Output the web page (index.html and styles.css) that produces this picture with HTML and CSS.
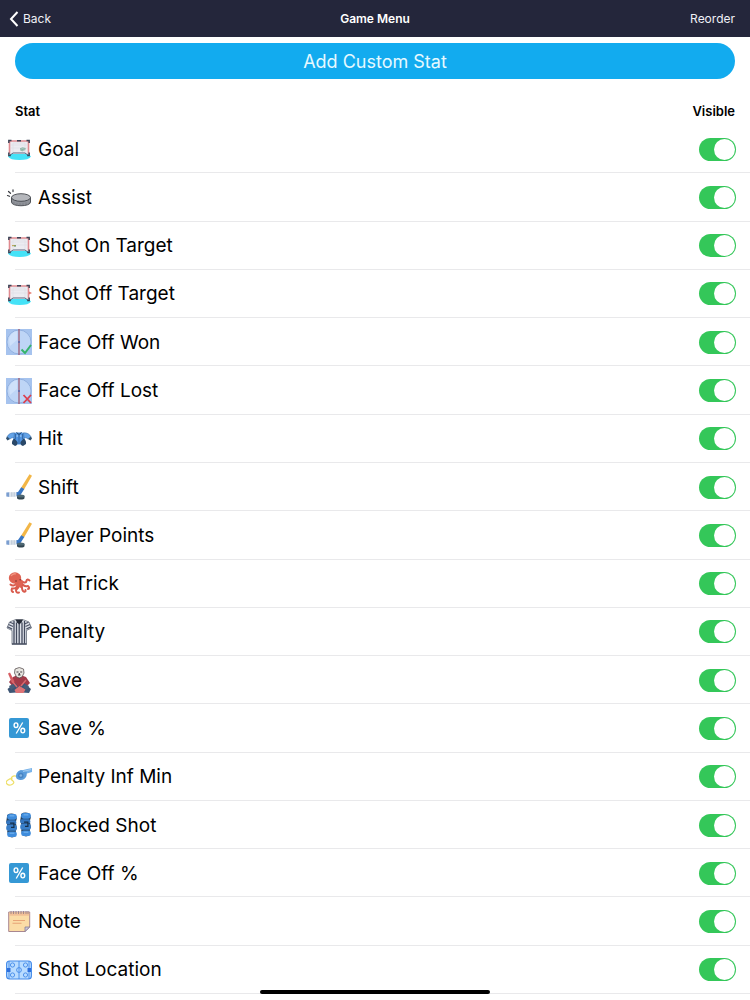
FILE: index.html
```html
<!DOCTYPE html>
<html lang="en">
<head>
  <meta charset="UTF-8">
  <meta name="viewport" content="width=device-width, initial-scale=1">
  <title>Game Menu</title>
  <link rel="stylesheet" href="styles.css">
</head>
<body>
  <!-- stat icons, used by the rows below -->
  <svg class="sprites" aria-hidden="true">
    <symbol id="net" viewBox="0 0 26 26">
      <path d="M3.500 18l19 0 2.500 2.500q-2 3.500-11.500 3.500T2 20.500z" fill="#45e2f7"/>
      <path d="M4 5h18v13l-3-1H7l-3 1z" fill="#ececf1"/>
      <path d="M7 16V7h12v9M5 9h16M5 12h16" stroke="#d9dae3" stroke-width=".5" fill="none"/>
      <path d="M3.500 18V5h19v13" fill="none" stroke="#e08a90" stroke-width="1.600"/>
      <path d="M3.500 19.500l3.500-2.500h12l3.500 2.500" fill="none" stroke="#59607a" stroke-width="1"/>
      <path d="M2.800 7V4.500H5.500M20.500 4.500h2.700V7M2.800 16.500v3h2M23.200 16.500v3h-2M11 4.800h4" fill="none" stroke="#3b4356" stroke-width="1.400"/>
    </symbol>
    <symbol id="goal" viewBox="0 0 26 26">
      <use href="#net"/>
      <path d="M14 12.500l2.500-1.500 3 1v2l-3 1.500-2.500-1z" fill="#a9c6bd"/>
      <path d="M14 12.500l2.500 1 3-1M16 14v1" stroke="#7ba396" stroke-width=".6" fill="none"/>
    </symbol>
    <symbol id="on-target" viewBox="0 0 26 26">
      <use href="#net"/>
      <path d="M6 12.600h4" stroke="#c2aa5c" stroke-width="1.200"/>
      <path d="M8 13h2" stroke="#3c8a63" stroke-width=".8"/>
    </symbol>
    <symbol id="off-target" viewBox="0 0 26 26">
      <use href="#net"/>
      <path d="M23 10.500l3 1.500-3 1.500z" fill="#e4786c"/>
    </symbol>
    <symbol id="puck" viewBox="0 0 26 26">
      <path d="M5.500 13.500v4.500c0 5 19 5 19 0v-4.500z" fill="#8f9299" stroke="#43464c" stroke-width=".9"/>
      <path d="M8 18v2.500M11 19v2.500M14 19v2.700M17 19v2.500M20 18.500v2.400" stroke="#72757c" stroke-width=".6"/>
      <ellipse cx="15" cy="13.500" rx="9.500" ry="3.800" fill="#b5b7bc" stroke="#43464c" stroke-width=".9"/>
      <path d="M1.500 11.500l2 .8M2.500 7.500l2 1.800M7 5.800v1.800" stroke="#3a3d42" stroke-width="1.200" stroke-linecap="round"/>
    </symbol>
    <symbol id="faceoff" viewBox="0 0 26 26">
      <rect width="26" height="26" fill="#a6c3ee"/>
      <circle cx="13" cy="13" r="12" fill="#bed5f6" stroke="#8aa9da" stroke-width=".8"/>
      <path d="M3 10a10 10 0 0 1 8-8v9L4 17z" fill="#cfe1fa"/>
      <path d="M13 0v26" stroke="#9a5269" stroke-width="1.200"/>
      <circle cx="13" cy="13" r="1" fill="#5869ad"/>
    </symbol>
    <symbol id="won" viewBox="0 0 26 26">
      <use href="#faceoff"/>
      <path d="M15.500 20.500l3.500 3.500 6-8" fill="none" stroke="#35b56a" stroke-width="2"/>
    </symbol>
    <symbol id="lost" viewBox="0 0 26 26">
      <use href="#faceoff"/>
      <path d="M17.500 17l7.500 8M25 17l-7.500 8" stroke="#dc3f4e" stroke-width="1.800"/>
    </symbol>
    <symbol id="pads" viewBox="0 0 26 26">
      <path d="M8 7l2.500-.5h5L18 7l1.500 10.500-3 1h-7l-3-1z" fill="#4f93e0"/>
      <path d="M8.500 6.800Q3 6.500 1 11l3 2q1.500-1.500 4-1.500zM17.500 6.800Q23 6.500 25 11l-3 2q-1.500-1.500-4-1.500z" fill="#63a3e8" stroke="#3a6ca5" stroke-width=".5"/>
      <path d="M1 10.500L0 12.500l1.500 2L4 13zM25 10.500l1 2-1.500 2L22 13z" fill="#2f506f"/>
      <path d="M8.500 12.500q-3 1.500-2.500 5.500l3 2q3-1 2.500-4zM17.500 12.500q3 1.500 2.500 5.500l-3 2q-3-1-2.500-4z" fill="#2a4868"/>
      <path d="M10.500 6.500l2.500 2 2.500-2" fill="none" stroke="#24405f"/>
      <path d="M13 8.500V18M9.500 8v5M16.500 8v5" fill="none" stroke="#2d5a90" stroke-width=".7"/>
      <path d="M10.500 10h1.500M14 10h1.500" stroke="#b8dbfa"/>
    </symbol>
    <symbol id="stick" viewBox="0 0 26 26">
      <path d="M23.500.3l2.500 1.400L18 15.500l-3-1.700z" fill="#f2b647"/>
      <path d="M15.200 13.300l3.100 1.800-3.500 5.300q-.6 1.300-2 1.500L10 22.300v-4l2-.3z" fill="#3977c5"/>
      <path d="M.3 18.500l3.200-.3v4.700l-3.200-.4z" fill="#7b9ed0"/>
      <path d="M3.500 18.200h7v4.500l-7 .2z" fill="#dfe6ee"/>
      <path d="M5.800 18.200v4.400M8.200 18.200v4.400" stroke="#a9b8c9" stroke-width=".7"/>
      <path d="M11 22v2c0 2 7.500 2 7.500 0v-2z" fill="#30444f"/>
      <ellipse cx="14.700" cy="22" rx="3.800" ry="1.500" fill="#4f6873"/>
    </symbol>
    <symbol id="octopus" viewBox="0 0 26 26">
      <g fill="none" stroke="#d95b4d" stroke-width="2" stroke-linecap="round">
        <path d="M11 12c-2 3-5 3-6.500 1.500M12 12c0 4-3 6-6 5.500-1 2 0 3 1 3.500M13 12c1 4-2 6-3 7 0 2 1 3 3 2.500M14 11c3 3 1 7 3 9 1.500 1.500 3 .5 2.500-1M15 11c2 4 4 5 7 4 1.500 1 1.500 3 0 3M15 9.500c2 2 5 3 5.500.5 0-2 2-2 3-.5"/>
      </g>
      <ellipse cx="9" cy="7" rx="6.200" ry="5.700" fill="#df6353"/>
      <path d="M9 9q6-3 8 2l-2 6-6-3z" fill="#df6353"/>
      <path d="M5 5q2-3 5-2" fill="none" stroke="#f19580" stroke-width="1.300"/>
      <circle cx="10" cy="10" r=".8" fill="#702e2c"/><circle cx="14.200" cy="8.800" r=".7" fill="#702e2c"/>
    </symbol>
    <symbol id="referee" viewBox="0 0 26 26">
      <path d="M9 .8L3.500 3 1 9l5 2.500V25.500h14.500V11.500L25.500 9 23 3 17.500.8z" fill="#dfe3ea" stroke="#535b6b" stroke-width=".7"/>
      <path d="M8 2v23M10.500 3.500V25M13.200 5v20M16 3.500V25M18.500 2v23" stroke="#434a5d" stroke-width="1.300"/>
      <path d="M1.500 7.800l4.700 2.300M2.500 5.500l4.500 2M4 3.300L8 5M25 7.800l-4.700 2.300M24 5.500l-4.500 2M22.500 3.300L18.500 5" stroke="#4b5265" stroke-width="1.200"/>
      <path d="M9.500.5h7.500L15.500 3.500 13.200 5.500 11 3.500z" fill="#262c38"/>
      <path d="M6 24.800h14.500" stroke="#4b5263" stroke-width="1.200"/>
    </symbol>
    <symbol id="goalie" viewBox="0 0 26 26">
      <path d="M7 10l6-2.500L20 10l4 6-4 4H7l-4-5z" fill="#a23a48"/>
      <path d="M2 6.500l2-1 4.500 9-2.500 1.500z" fill="#d65d62"/>
      <path d="M9 16L1.500 22l2 4 7-.5 3-5zM18 16l7 6-2 4-7-.5-3-5z" fill="#3d5574"/>
      <path d="M8.500 23l5-4 6 3.500-2 3.500H10z" fill="#dd7376"/>
      <path d="M6 14l5 6M20 13l-5 6" stroke="#d9686c" stroke-width="1.500"/>
      <path d="M3 19l4-2 2 3-4 3zM23 19l-4-2-2 3 4 3z" fill="#465e7a"/>
      <path d="M9 2q4.300-3 8.500 0l.5 4-2 4-2.700 1L10.500 10 8.500 6z" fill="#e7e5df" stroke="#4b4044" stroke-width=".7"/>
      <path d="M10.500 5h2M14.200 5h2M12 8h2.600M13.300 6v2" stroke="#443f45" stroke-width="1.200"/>
    </symbol>
    <symbol id="percent" viewBox="0 0 26 26">
      <rect x="3" y="3" width="20" height="20" rx="2" fill="#3598d5"/>
      <g fill="none" stroke="#fff" stroke-width="1.400">
        <ellipse cx="10" cy="10.200" rx="1.900" ry="2.300"/>
        <ellipse cx="16.800" cy="15.600" rx="1.900" ry="2.300"/>
        <path d="M16.700 7.500l-6.500 11" stroke-width="1.300"/>
      </g>
    </symbol>
    <symbol id="whistle" viewBox="0 0 26 26">
      <path d="M11 12.500q-3-1.500-5 .5t1 4q2 2-1 3.500t-5-.5 1-4 4.500-1" fill="none" stroke="#eedf66" stroke-width="1.200"/>
      <path d="M12 7.500L19 5.500l7-1.500v4l-5 1.500z" fill="#79b3e9"/>
      <path d="M21 8l-.5 4q-2 4.500-6.500 4t-4-4.500q.5-4.500 5-5.500z" fill="#5b9cdb"/>
      <circle cx="14.800" cy="11.500" r="2.700" fill="#4783c3"/><circle cx="14.800" cy="11.500" r="1.300" fill="#86b5e2"/>
      <path d="M17 7.500l8-2" stroke="#b4d4f3" stroke-width=".8"/>
    </symbol>
    <symbol id="shin-guard" viewBox="0 0 12 26">
      <path d="M1 2q4-3 9 0l1 4-1 3 1 7-1 2v6q-4 3-8 0l-1-5 1-3L0 9z" fill="#23405f"/>
      <rect x="1" y="1" width="10" height="6" rx="2.500" fill="#3f8cdc"/>
      <rect x="0" y="7.500" width="10.500" height="4.500" rx="1.800" fill="#3477c2"/>
      <rect x="0" y="12.500" width="11" height="6" rx="2" fill="#397ec9"/>
      <rect x="1" y="19.200" width="10" height="5.800" rx="2.500" fill="#3f8cdc"/>
      <path d="M3.500 3h5M3.500 21h5" stroke="#7bb9f1" stroke-width="1"/>
      <path d="M4 10.500h4V15H5" fill="none" stroke="#152d47" stroke-width="1.200"/>
    </symbol>
    <symbol id="blocked" viewBox="0 0 26 26">
      <use href="#shin-guard" x="0" y="1" width="12" height="25"/>
      <use href="#shin-guard" x="14" y="0" width="12" height="25"/>
    </symbol>
    <symbol id="note" viewBox="0 0 26 26">
      <path d="M2.700 3h21v15l-4.700 4.500H2.700z" fill="#fbdca6" stroke="#a98790"/>
      <path d="M3.200 3.500h20v3.200h-20z" fill="#f2c096"/>
      <path d="M5 2v3M7.500 2v3M10 2v3M12.500 2v3M15 2v3M17.500 2v3M20 2v3M22 2v3" stroke="#927886" stroke-width=".8"/>
      <path d="M7 11.500h12M6.500 14.200h9" stroke="#e8a477" stroke-width="1.100"/>
      <path d="M19 22.500V18h4.700z" fill="#cbc7db" stroke="#877e98" stroke-width=".8"/>
    </symbol>
    <symbol id="rink" viewBox="0 0 26 26">
      <rect x=".6" y="4" width="24.800" height="18" rx="3" fill="#b9dcff" stroke="#4289e9" stroke-width="1.100"/>
      <g fill="none" stroke="#4289e9" stroke-width=".9">
        <path d="M13 4v18M3 4v18M23 4v18"/>
        <circle cx="13" cy="13" r="2.400"/>
        <circle cx="6.500" cy="8" r="2.100"/><circle cx="6.500" cy="18" r="2.100"/>
        <circle cx="19.500" cy="8" r="2.100"/><circle cx="19.500" cy="18" r="2.100"/>
      </g>
      <path d="M1 11h3.500v4H1zM21.500 11H25v4h-3.500z" fill="#2e70dd"/>
    </symbol>
  </svg>

  <header class="navbar">
    <button class="nav-button back" type="button">
      <svg class="chevron" viewBox="0 0 10 16" aria-hidden="true"><path d="M8.500 1L2 8l6.500 7"/></svg>
      Back
    </button>
    <h1>Game Menu</h1>
    <button class="nav-button reorder" type="button">Reorder</button>
  </header>

  <main>
    <button class="add-button" type="button">Add Custom Stat</button>

    <div class="list-header">
      <span>Stat</span>
      <span>Visible</span>
    </div>

    <ul class="stat-list">
      <li><svg class="icon"><use href="#goal"/></svg><label for="goal-on">Goal</label><input class="switch" type="checkbox" id="goal-on" checked></li>
      <li><svg class="icon"><use href="#puck"/></svg><label for="assist-on">Assist</label><input class="switch" type="checkbox" id="assist-on" checked></li>
      <li><svg class="icon"><use href="#on-target"/></svg><label for="on-target-on">Shot On Target</label><input class="switch" type="checkbox" id="on-target-on" checked></li>
      <li><svg class="icon"><use href="#off-target"/></svg><label for="off-target-on">Shot Off Target</label><input class="switch" type="checkbox" id="off-target-on" checked></li>
      <li><svg class="icon"><use href="#won"/></svg><label for="won-on">Face Off Won</label><input class="switch" type="checkbox" id="won-on" checked></li>
      <li><svg class="icon"><use href="#lost"/></svg><label for="lost-on">Face Off Lost</label><input class="switch" type="checkbox" id="lost-on" checked></li>
      <li><svg class="icon"><use href="#pads"/></svg><label for="hit-on">Hit</label><input class="switch" type="checkbox" id="hit-on" checked></li>
      <li><svg class="icon"><use href="#stick"/></svg><label for="shift-on">Shift</label><input class="switch" type="checkbox" id="shift-on" checked></li>
      <li><svg class="icon"><use href="#stick"/></svg><label for="points-on">Player Points</label><input class="switch" type="checkbox" id="points-on" checked></li>
      <li><svg class="icon"><use href="#octopus"/></svg><label for="hat-trick-on">Hat Trick</label><input class="switch" type="checkbox" id="hat-trick-on" checked></li>
      <li><svg class="icon"><use href="#referee"/></svg><label for="penalty-on">Penalty</label><input class="switch" type="checkbox" id="penalty-on" checked></li>
      <li><svg class="icon"><use href="#goalie"/></svg><label for="save-on">Save</label><input class="switch" type="checkbox" id="save-on" checked></li>
      <li><svg class="icon"><use href="#percent"/></svg><label for="save-pct-on">Save %</label><input class="switch" type="checkbox" id="save-pct-on" checked></li>
      <li><svg class="icon"><use href="#whistle"/></svg><label for="pim-on">Penalty Inf Min</label><input class="switch" type="checkbox" id="pim-on" checked></li>
      <li><svg class="icon"><use href="#blocked"/></svg><label for="blocked-on">Blocked Shot</label><input class="switch" type="checkbox" id="blocked-on" checked></li>
      <li><svg class="icon"><use href="#percent"/></svg><label for="faceoff-pct-on">Face Off %</label><input class="switch" type="checkbox" id="faceoff-pct-on" checked></li>
      <li><svg class="icon"><use href="#note"/></svg><label for="note-on">Note</label><input class="switch" type="checkbox" id="note-on" checked></li>
      <li><svg class="icon"><use href="#rink"/></svg><label for="location-on">Shot Location</label><input class="switch" type="checkbox" id="location-on" checked></li>
    </ul>
  </main>

  <div class="home-indicator"></div>
</body>
</html>
```

FILE: styles.css
```css
* {
  box-sizing: border-box;
}
body {
  font-family: Inter, "Liberation Sans", sans-serif;
  margin: 0;
  min-height: 100vh;
  display: flex;
  flex-direction: column;
  background: #FFFFFF;
  color: #000000;
}
button {
  font-family: inherit;
  border: none;
  cursor: pointer;
}
.sprites {
  display: none;
}

/* top bar */
.navbar {
  display: grid;
  grid-template-columns: 1fr auto 1fr;
  align-items: center;
  height: 37px;
  padding: 0 9px;
  background: #24263B;
  color: #FFFFFF;
}
.navbar h1 {
  margin: 0;
  font-size: 12px;
  font-weight: 600;
}
.nav-button {
  display: flex;
  align-items: center;
  gap: 4px;
  padding: 0;
  background: none;
  color: #F0F0F6;
  font-size: 12px;
}
.reorder {
  justify-self: end;
  padding-right: 6px;
}
.chevron {
  width: 10px;
  height: 16px;
  fill: none;
  stroke: #FFFFFF;
  stroke-width: 2;
}

main {
  flex: 1;
  display: flex;
  flex-direction: column;
  padding: 6px 0;
}
.add-button {
  height: 36px;
  margin: 0 15px;
  border-radius: 18px;
  background: #12ABEF;
  color: #E6F9FF;
  font-size: 18px;
}
.list-header {
  display: flex;
  justify-content: space-between;
  align-items: center;
  height: 28px;
  margin: 18px 15px 0;
  padding-bottom: 1px;
  font-size: 13px;
  font-weight: 600;
}

/* rows share the rest of the screen */
.stat-list {
  flex: 1;
  display: grid;
  grid-auto-rows: 1fr;
  list-style: none;
  margin: 0;
  padding: 0;
}
.stat-list li {
  display: flex;
  align-items: center;
  gap: 6px;
  min-height: 44px;
  padding: 0 14px 0 6px;
  background: linear-gradient(#E9E9EB, #E9E9EB) 15px 100% / 100% 1px no-repeat;
}
.stat-list label {
  flex: 1;
  font-size: 19px;
}
.icon {
  width: 26px;
  height: 26px;
}

/* on/off switch */
.switch {
  appearance: none;
  display: flex;
  width: 37px;
  height: 23px;
  margin: 0;
  padding: 1px;
  border-radius: 12px;
  background: #E9E9EA;
  cursor: pointer;
}
.switch::before {
  content: "";
  width: 21px;
  height: 21px;
  border-radius: 50%;
  background: #FFFFFF;
}
.switch:checked {
  justify-content: flex-end;
  background: #34C759;
}

.home-indicator {
  position: fixed;
  bottom: 6px;
  left: 50%;
  width: 230px;
  height: 4px;
  margin-left: -115px;
  border-radius: 2px;
  background: #000000;
}
```
